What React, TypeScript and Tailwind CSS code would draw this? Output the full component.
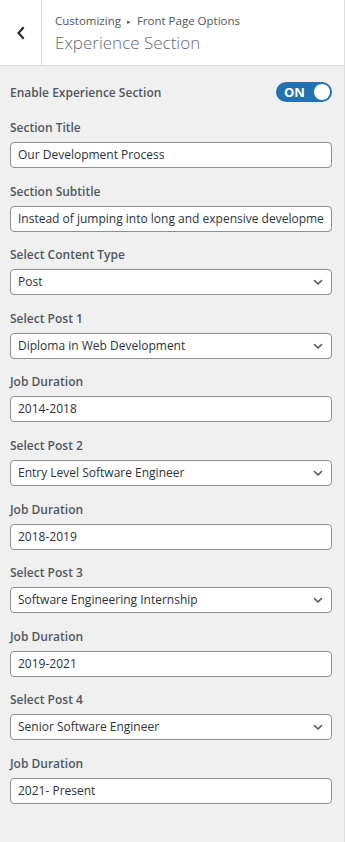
import React from "react";

const font = { fontFamily: '"Open Sans", "Noto Sans", sans-serif' };

function Label({ children }: { children: React.ReactNode }) {
  return <div className="pt-[1px] text-[12px] leading-[18px] font-semibold text-[#50575e] whitespace-nowrap">{children}</div>;
}

function TextInput({ value }: { value: string }) {
  return (
    <div className="mt-[5px] h-[26px] rounded-[4px] border border-[#8c8f94] bg-white px-[7px] flex items-center overflow-hidden">
      <span className="text-[12px] text-[#2c3338] whitespace-nowrap">{value}</span>
    </div>
  );
}

function Select({ value }: { value: string }) {
  return (
    <div className="mt-[5px] h-[26px] rounded-[4px] border border-[#8c8f94] bg-white pl-[7px] pr-[7px] flex items-center justify-between overflow-hidden">
      <span className="text-[12px] text-[#2c3338] whitespace-nowrap">{value}</span>
      <svg width="12" height="12" viewBox="0 0 12 12" fill="none">
        <path d="M2.5 4.5L6 8L9.5 4.5" stroke="#50575e" strokeWidth="1.6" strokeLinecap="round" strokeLinejoin="round" />
      </svg>
    </div>
  );
}

type Field = { label: string; type: "input" | "select"; value: string };

const fields: Field[] = [
  { label: "Section Title", type: "input", value: "Our Development Process" },
  { label: "Section Subtitle", type: "input", value: "Instead of jumping into long and expensive developme" },
  { label: "Select Content Type", type: "select", value: "Post" },
  { label: "Select Post 1", type: "select", value: "Diploma in Web Development" },
  { label: "Job Duration", type: "input", value: "2014-2018" },
  { label: "Select Post 2", type: "select", value: "Entry Level Software Engineer" },
  { label: "Job Duration", type: "input", value: "2018-2019" },
  { label: "Select Post 3", type: "select", value: "Software Engineering Internship" },
  { label: "Job Duration", type: "input", value: "2019-2021" },
  { label: "Select Post 4", type: "select", value: "Senior Software Engineer" },
  { label: "Job Duration", type: "input", value: "2021- Present" },
];

export default function App() {
  return (
    <div style={font} className="w-[345px] h-[842px] bg-[#f0f0f1] border-r border-[#dcdcde] overflow-hidden">
      <div className="h-[66px] bg-white border-b border-[#dcdcde] flex">
        <div className="w-[42px] h-full border-r border-[#dcdcde] flex items-center justify-center">
          <svg width="12" height="14" viewBox="0 0 12 14" fill="none">
            <path d="M8 2L3.5 7L8 12" stroke="#1d2327" strokeWidth="2" strokeLinecap="square" />
          </svg>
        </div>
        <div className="pl-[13px] pt-[12px]">
          <div className="text-[11.5px] leading-[17px] text-[#50575e] whitespace-nowrap">
            Customizing <span className="text-[7px] align-middle mx-[3px]">▸</span> Front Page Options
          </div>
          <div className="text-[17px] leading-[26px] font-light text-[#646970] whitespace-nowrap">Experience Section</div>
        </div>
      </div>
      <div className="pl-[10px] pr-[12px] pt-[15px]">
        <div className="flex items-center justify-between h-[22px]">
          <Label>Enable Experience Section</Label>
          <div className="w-[56px] h-[20px] rounded-full bg-[#2271b1] flex items-center justify-between pl-[8px] pr-[2px]">
            <span className="text-[13px] font-bold text-white leading-none">ON</span>
            <span className="w-[16px] h-[16px] rounded-full bg-white"></span>
          </div>
        </div>
        <div className="mt-[15px] flex flex-col gap-[13.6px]">
          {fields.map((f, i) => (
            <div key={i}>
              <Label>{f.label}</Label>
              {f.type === "input" ? <TextInput value={f.value} /> : <Select value={f.value} />}
            </div>
          ))}
        </div>
      </div>
    </div>
  );
}
